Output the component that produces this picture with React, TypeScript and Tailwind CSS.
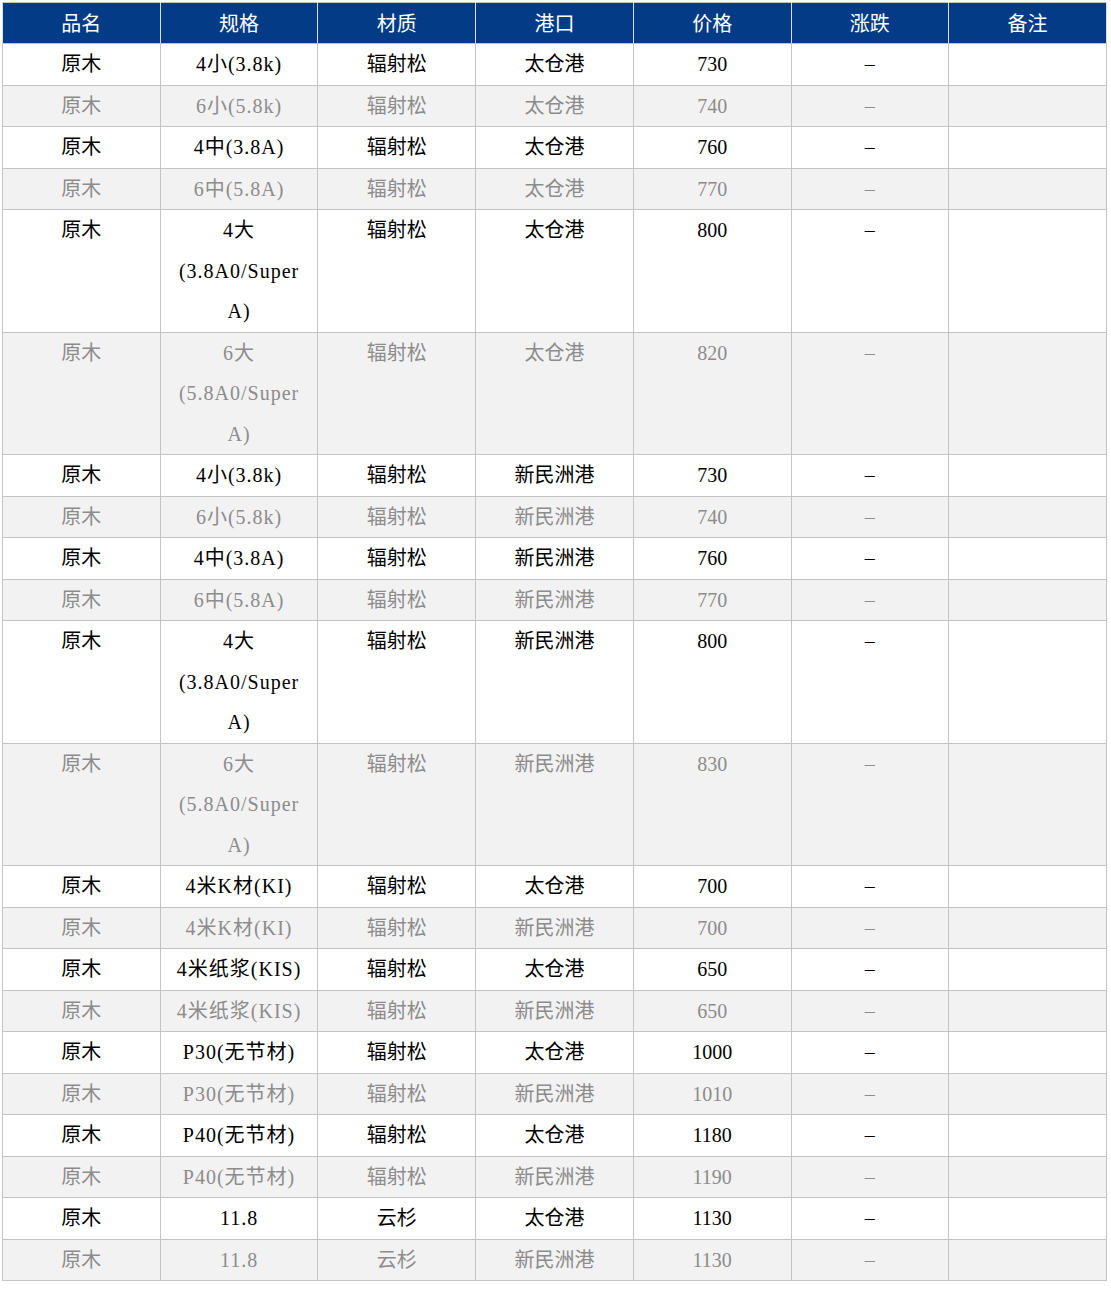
import React from "react";

type Row = { spec: string[]; material: string; port: string; price: string };

const rows: Row[] = [
  { spec: ["4小(3.8k)"], material: "辐射松", port: "太仓港", price: "730" },
  { spec: ["6小(5.8k)"], material: "辐射松", port: "太仓港", price: "740" },
  { spec: ["4中(3.8A)"], material: "辐射松", port: "太仓港", price: "760" },
  { spec: ["6中(5.8A)"], material: "辐射松", port: "太仓港", price: "770" },
  { spec: ["4大", "(3.8A0/Super", "A)"], material: "辐射松", port: "太仓港", price: "800" },
  { spec: ["6大", "(5.8A0/Super", "A)"], material: "辐射松", port: "太仓港", price: "820" },
  { spec: ["4小(3.8k)"], material: "辐射松", port: "新民洲港", price: "730" },
  { spec: ["6小(5.8k)"], material: "辐射松", port: "新民洲港", price: "740" },
  { spec: ["4中(3.8A)"], material: "辐射松", port: "新民洲港", price: "760" },
  { spec: ["6中(5.8A)"], material: "辐射松", port: "新民洲港", price: "770" },
  { spec: ["4大", "(3.8A0/Super", "A)"], material: "辐射松", port: "新民洲港", price: "800" },
  { spec: ["6大", "(5.8A0/Super", "A)"], material: "辐射松", port: "新民洲港", price: "830" },
  { spec: ["4米K材(KI)"], material: "辐射松", port: "太仓港", price: "700" },
  { spec: ["4米K材(KI)"], material: "辐射松", port: "新民洲港", price: "700" },
  { spec: ["4米纸浆(KIS)"], material: "辐射松", port: "太仓港", price: "650" },
  { spec: ["4米纸浆(KIS)"], material: "辐射松", port: "新民洲港", price: "650" },
  { spec: ["P30(无节材)"], material: "辐射松", port: "太仓港", price: "1000" },
  { spec: ["P30(无节材)"], material: "辐射松", port: "新民洲港", price: "1010" },
  { spec: ["P40(无节材)"], material: "辐射松", port: "太仓港", price: "1180" },
  { spec: ["P40(无节材)"], material: "辐射松", port: "新民洲港", price: "1190" },
  { spec: ["11.8"], material: "云杉", port: "太仓港", price: "1130" },
  { spec: ["11.8"], material: "云杉", port: "新民洲港", price: "1130" },
];

const heads = ["品名", "规格", "材质", "港口", "价格", "涨跌", "备注"];

export default function App() {
  const cell = "border border-[#c4c4c4] px-2 py-0 align-top text-center leading-[40.5px]";

  return (
    <div className="bg-white pl-[2px] pt-[2px] min-h-[1292px]">
      <table
        className="w-[1105px] table-fixed border-collapse text-[20px]"
        style={{ fontFamily: '"Liberation Serif", "Noto Sans CJK SC", serif' }}
      >
        <thead>
          <tr className="bg-[#033b87] text-white">
            {heads.map((h) => (
              <th
                key={h}
                className="border border-[#c4c4c4] border-x-[#d8dde8] h-[41px] py-0 text-center font-normal leading-[40px]"
                style={{ fontFamily: '"Noto Sans CJK SC", sans-serif' }}
              >
                {h}
              </th>
            ))}
          </tr>
        </thead>
        <tbody>
          {rows.map((r, i) => (
            <tr key={i} className={i % 2 ? "bg-[#f2f2f2] text-[#8c8c8c]" : "bg-white text-black"}>
              <td className={cell}>原木</td>
              <td className={`${cell} tracking-[1px]`}>
                {r.spec.map((s, j) => (
                  <div key={j}>{s}</div>
                ))}
              </td>
              <td className={cell}>{r.material}</td>
              <td className={cell}>{r.port}</td>
              <td className={cell}>{r.price}</td>
              <td className={cell}>–</td>
              <td className={cell}></td>
            </tr>
          ))}
        </tbody>
      </table>
    </div>
  );
}
